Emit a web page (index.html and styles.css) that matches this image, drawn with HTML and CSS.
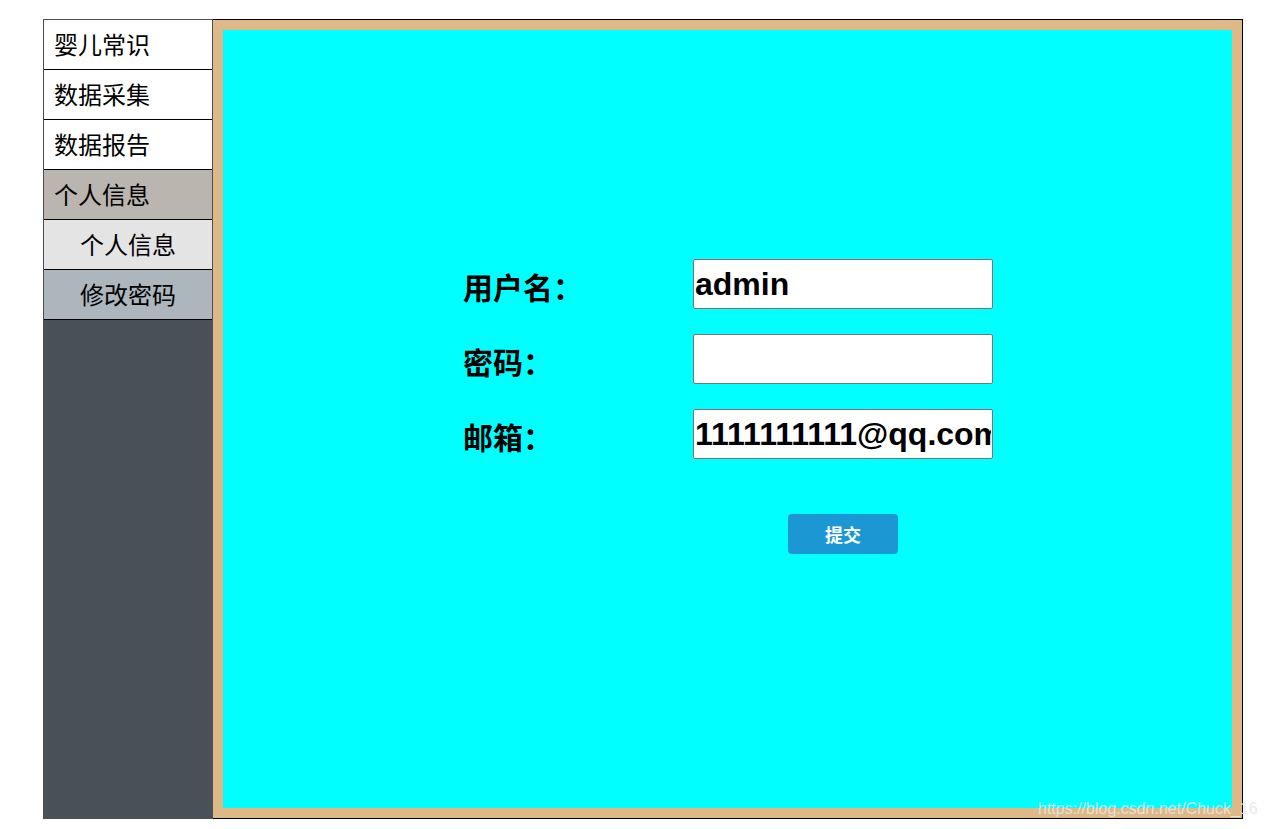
FILE: index.html
```html
<!DOCTYPE html>
<html lang="zh">
<head>
<meta charset="utf-8">
<title>个人信息</title>
<link rel="stylesheet" href="styles.css">
</head>
<body>
<div class="page">
  <nav class="sidebar">
    <div class="item">婴儿常识</div>
    <div class="item">数据采集</div>
    <div class="item">数据报告</div>
    <div class="item item-open">个人信息</div>
    <div class="item sub sub-active">个人信息</div>
    <div class="item sub sub-other">修改密码</div>
  </nav>
  <main class="panel">
    <div class="frame">
      <form class="form">
        <label class="label" for="u">用户名：</label>
        <input class="field" id="u" type="text" value="admin">
        <label class="label" for="p">密码：</label>
        <input class="field" id="p" type="password" value="">
        <label class="label" for="m">邮箱：</label>
        <input class="field" id="m" type="text" value="1111111111@qq.com">
        <div class="btn-cell"><button class="btn" type="button">提交</button></div>
      </form>
    </div>
  </main>
</div>
<div class="watermark">https://blog.csdn.net/Chuck_16</div>
</body>
</html>
```
FILE: styles.css
```css
html, body {
  margin: 0;
  padding: 0;
  background: #ffffff;
}

body {
  font-family: "Noto Sans CJK SC", "Liberation Sans", sans-serif;
  position: relative;
  width: 1266px;
  height: 829px;
  overflow: hidden;
}

.page {
  display: flex;
  width: 1200px;
  height: 800px;
  margin: 19px 0 0 43px;
}

.sidebar {
  box-sizing: border-box;
  width: 170px;
  height: 800px;
  background: #495057;
  border-top: 1px solid #495057;
  border-left: 1px solid #495057;
  border-right: 1px solid #495057;
  display: flex;
  flex-direction: column;
}

.item {
  height: 49px;
  line-height: 48px;
  border-bottom: 1px solid #000000;
  background: #ffffff;
  color: #000000;
  font-size: 24px;
  padding-left: 10px;
  white-space: nowrap;
}

.item-open {
  background: #bab5ae;
}

.sub {
  padding-left: 36px;
}

.sub-active {
  background: #e4e4e4;
}

.sub-other {
  background: #adb5bd;
}

.panel {
  box-sizing: border-box;
  width: 1030px;
  height: 800px;
  border-top: 1px solid #000000;
  border-right: 1px solid #000000;
  border-bottom: 1px solid #000000;
  display: flex;
}

.frame {
  flex: 1;
  border: 10px solid #deb887;
  background: #00ffff;
}

.form {
  display: grid;
  grid-template-columns: 230px 300px;
  grid-template-rows: 50px 50px 50px 70px;
  row-gap: 25px;
  align-items: center;
  margin: 229px 0 0 240px;
}

.label {
  box-sizing: border-box;
  height: 50px;
  font-family: "Noto Sans CJK SC", sans-serif;
  font-weight: 700;
  font-size: 30px;
  line-height: 46px;
  padding-top: 4px;
  color: #000000;
  white-space: nowrap;
}

.field {
  box-sizing: border-box;
  width: 300px;
  height: 50px;
  margin: 0;
  padding: 0 1px;
  border: 1px solid #767676;
  border-radius: 2px;
  background: #ffffff;
  font-family: "Liberation Sans", Arial, sans-serif;
  font-weight: 700;
  font-size: 32px;
  color: #000000;
  outline: none;
}

.btn-cell {
  grid-column: 2;
  align-self: start;
  display: flex;
  justify-content: center;
  padding-top: 30px;
}

.btn {
  width: 110px;
  height: 40px;
  border: none;
  border-radius: 4px;
  background: #1b98d4;
  color: #ffffff;
  font-family: "Noto Sans CJK SC", sans-serif;
  font-weight: 700;
  font-size: 18px;
  padding: 0;
  cursor: pointer;
}

.watermark {
  position: absolute;
  left: 1038px;
  top: 799px;
  font-family: "Liberation Sans", Arial, sans-serif;
  font-size: 16px;
  line-height: 20px;
  color: rgba(230, 230, 230, 0.9);
  white-space: nowrap;
}
```
